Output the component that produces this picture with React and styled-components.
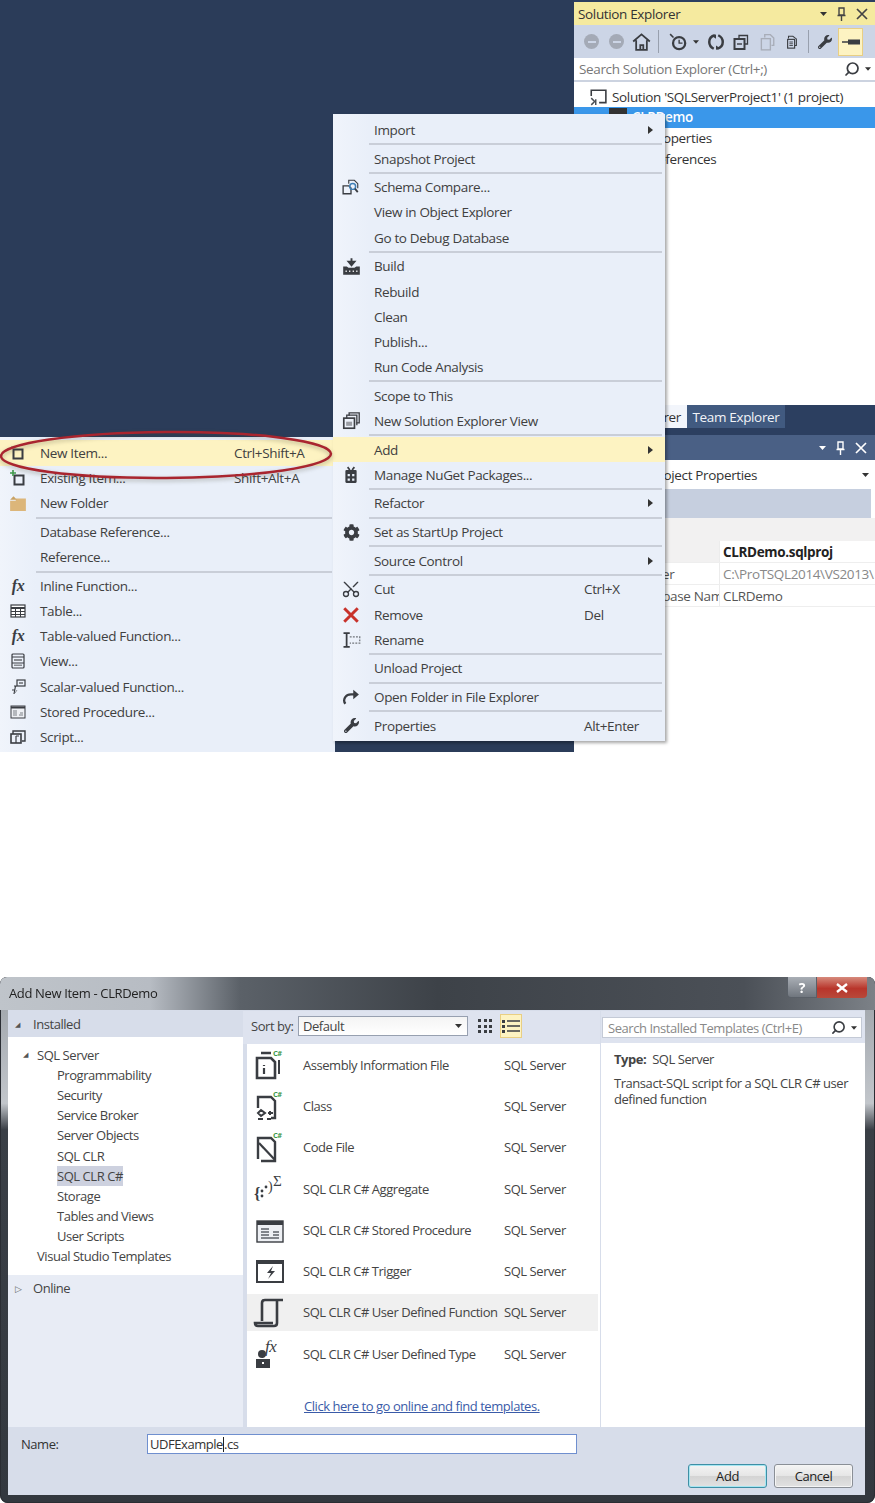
import React from "react";
import styled, { createGlobalStyle } from "styled-components";
import { Search, Scissors } from "lucide-react";
import { FaCog, FaWrench } from "react-icons/fa";

const GlobalStyle = createGlobalStyle`
  html, body { margin: 0; padding: 0; background: #fff; }
  body { font-family: "Open Sans", "Noto Sans", sans-serif; color: #3a3a3a; }
  * { box-sizing: border-box; }
`;

const Ink = "#3a3d42";

const Glyph = ({ s = 16, children, ...rest }) => (
  <svg width={s} height={s} viewBox="0 0 16 16" fill="none" {...rest}>
    {children}
  </svg>
);

const Caret = ({ color = "#333", w = 7 }) => (
  <svg width={w} height="4" viewBox="0 0 7 4"><path d="M0 0h7L3.5 4z" fill={color} /></svg>
);

/* menu icons */
const icons = {
  schema: (
    <Glyph s={18}>
      <path d="M1 7h5l2 2v5H1z" stroke={Ink} strokeWidth="1.2" />
      <path d="M6 5V2h5l3 3v4" stroke={Ink} strokeWidth="1" />
      <circle cx="9.5" cy="7.5" r="2.6" stroke="#3f7fb5" strokeWidth="1.3" />
      <path d="M11.5 9.5l2.5 3" stroke={Ink} strokeWidth="1.6" />
    </Glyph>
  ),
  build: (
    <Glyph s={19}>
      <path d="M8 1v5M5.5 4L8 7l2.5-3z" stroke={Ink} strokeWidth="1.6" fill={Ink} />
      <path d="M1 8h3l1.5 1h5L12 8h3v7H1z" fill={Ink} />
      <path d="M3 12h1M6 12h1M9 12h1M12 12h1" stroke="#fff" strokeWidth="1.4" />
    </Glyph>
  ),
  newView: (
    <Glyph s={19}>
      <path d="M6 4V1.5h8.5V10H12" stroke={Ink} strokeWidth="1.1" />
      <path d="M4 6V3.5h8.5V12" stroke={Ink} strokeWidth="1.1" />
      <rect x="1.5" y="6" width="9" height="8.5" stroke={Ink} strokeWidth="1.4" />
      <rect x="3.5" y="9" width="5" height="3.5" fill="#9a9da3" />
    </Glyph>
  ),
  nuget: (
    <Glyph s={18}>
      <path d="M5 1l2 2.5M11 1L9 3.5" stroke={Ink} strokeWidth="1.5" />
      <rect x="3" y="3.5" width="10" height="11.5" rx="1" fill={Ink} />
      <path d="M5 7h2v2H5zM9 7h2v2H9zM5 11h2v2H5zM9 11h2v2H9z" fill="#e8eff9" />
    </Glyph>
  ),
  gear: <FaCog size={17} color={Ink} />,
  cut: <Scissors size={20} color={Ink} strokeWidth={1.6} style={{ transform: "rotate(-90deg)" }} />,
  remove: (
    <Glyph s={18}>
      <path d="M2 2l12 12M14 2L2 14" stroke="#c8322b" strokeWidth="2.6" />
    </Glyph>
  ),
  rename: (
    <Glyph s={20}>
      <path d="M2 2.5h5M2 13.5h5M4.5 2.5v11" stroke={Ink} strokeWidth="1.4" />
      <path d="M7 5.5h8v5H7" stroke="#70747a" strokeWidth="1" strokeDasharray="1.5 1" />
    </Glyph>
  ),
  open: (
    <Glyph s={18}>
      <path d="M3 14c-1.5-2-1.5-4 0-6 1-1.5 3-2.3 5-2.3h3" stroke={Ink} strokeWidth="2" />
      <path d="M10 1.5l5 4.2-5 4.2z" fill={Ink} />
    </Glyph>
  ),
  wrench: <FaWrench size={15} color={Ink} />,
  newItem: (
    <Glyph>
      <rect x="3.5" y="4.5" width="9" height="9" stroke={Ink} strokeWidth="2" />
      <path d="M1 1.5h3" stroke="#c9b9a0" strokeWidth="1" />
    </Glyph>
  ),
  existing: (
    <Glyph>
      <rect x="4.5" y="5.5" width="9" height="9" stroke={Ink} strokeWidth="2" />
      <path d="M3 0v6M0 3h6" stroke="#3f9a4c" strokeWidth="1.6" />
    </Glyph>
  ),
  folder: (
    <Glyph s={18}>
      <path d="M1 6h5V4h9v11H1z" fill="#dcb67a" />
      <path d="M1 5l3-3 3 3z" fill="#c9a263" />
    </Glyph>
  ),
  table: (
    <Glyph>
      <rect x="1" y="2" width="14" height="12" fill="#fff" stroke={Ink} strokeWidth="1.2" />
      <path d="M1 5h14" stroke={Ink} strokeWidth="2" />
      <path d="M1 8.5h14M1 11.5h14M5.5 4v10M10.5 4v10" stroke={Ink} strokeWidth="1" />
    </Glyph>
  ),
  view: (
    <Glyph>
      <rect x="2" y="1" width="12" height="14" rx="1" stroke={Ink} strokeWidth="1.2" />
      <path d="M2 4h12M2 10h12" stroke={Ink} strokeWidth="1" />
      <rect x="4" y="6" width="8" height="2" fill="#8a8d92" />
      <rect x="4" y="11.5" width="8" height="1.5" fill="#8a8d92" />
    </Glyph>
  ),
  scalar: (
    <Glyph>
      <rect x="7" y="1" width="8" height="6" stroke={Ink} strokeWidth="1.2" />
      <rect x="9" y="3" width="4" height="2" fill="#8a8d92" />
      <path d="M4 7h3M5.5 7L4 15M2 11h3" stroke={Ink} strokeWidth="1.2" />
      <path d="M7 11l-2 3" stroke="#8a8d92" strokeWidth="1" />
    </Glyph>
  ),
  stored: (
    <Glyph>
      <rect x="1" y="2" width="14" height="12" fill="#eef0f4" stroke={Ink} strokeWidth="1" />
      <path d="M1 3.5h14" stroke={Ink} strokeWidth="2" />
      <path d="M3 7h4M3 9h4M3 11h4M10 9h3M9 11h4" stroke="#7c8086" strokeWidth="1" />
    </Glyph>
  ),
  script: (
    <Glyph>
      <path d="M3 5V2h12v10h-3" stroke={Ink} strokeWidth="1.4" />
      <rect x="1" y="5" width="10" height="9" stroke={Ink} strokeWidth="1.6" />
      <path d="M6 7v7M6 7h3" stroke={Ink} strokeWidth="1.2" />
    </Glyph>
  ),
};

const projectMenu = [
  { label: "Import", arrow: true },
  "sep",
  { label: "Snapshot Project" },
  "sep",
  { label: "Schema Compare...", icon: "schema" },
  { label: "View in Object Explorer" },
  { label: "Go to Debug Database" },
  "sep",
  { label: "Build", icon: "build" },
  { label: "Rebuild" },
  { label: "Clean" },
  { label: "Publish..." },
  { label: "Run Code Analysis" },
  "sep",
  { label: "Scope to This" },
  { label: "New Solution Explorer View", icon: "newView" },
  "sep",
  { label: "Add", arrow: true, hot: true },
  { label: "Manage NuGet Packages...", icon: "nuget" },
  "sep",
  { label: "Refactor", arrow: true },
  "sep",
  { label: "Set as StartUp Project", icon: "gear" },
  "sep",
  { label: "Source Control", arrow: true },
  "sep",
  { label: "Cut", icon: "cut", shortcut: "Ctrl+X" },
  { label: "Remove", icon: "remove", shortcut: "Del" },
  { label: "Rename", icon: "rename" },
  "sep",
  { label: "Unload Project" },
  "sep",
  { label: "Open Folder in File Explorer", icon: "open" },
  "sep",
  { label: "Properties", icon: "wrench", shortcut: "Alt+Enter" },
];

const addMenu = [
  { label: "New Item...", icon: "newItem", shortcut: "Ctrl+Shift+A", hot: true },
  { label: "Existing Item...", icon: "existing", shortcut: "Shift+Alt+A" },
  { label: "New Folder", icon: "folder" },
  "sep",
  { label: "Database Reference..." },
  { label: "Reference..." },
  "sep",
  { label: "Inline Function...", fx: true },
  { label: "Table...", icon: "table" },
  { label: "Table-valued Function...", fx: true },
  { label: "View...", icon: "view" },
  { label: "Scalar-valued Function...", icon: "scalar" },
  { label: "Stored Procedure...", icon: "stored" },
  { label: "Script...", icon: "script" },
];

const treeRows = [
  { label: "SQL Server", indent: 29, open: true },
  { label: "Programmability", indent: 49 },
  { label: "Security", indent: 49 },
  { label: "Service Broker", indent: 49 },
  { label: "Server Objects", indent: 49 },
  { label: "SQL CLR", indent: 49 },
  { label: "SQL CLR C#", indent: 49, picked: true },
  { label: "Storage", indent: 49 },
  { label: "Tables and Views", indent: 49 },
  { label: "User Scripts", indent: 49 },
  { label: "Visual Studio Templates", indent: 29 },
];

const CsBadge = () => (
  <text x="20" y="7" fontSize="7.5" fontWeight="700" fill="#3f9a4c" fontFamily="Open Sans">C#</text>
);

const templateIcons = {
  info: (
    <svg width="32" height="32" viewBox="0 0 32 32" fill="none">
      <path d="M8 4h10M4 9h14l4 4v16H4z" stroke={Ink} strokeWidth="2.6" />
      <path d="M26 11v14" stroke={Ink} strokeWidth="2" />
      <path d="M11 16v1M11 19v6" stroke={Ink} strokeWidth="2.2" />
      <CsBadge />
    </svg>
  ),
  class: (
    <svg width="32" height="32" viewBox="0 0 32 32" fill="none">
      <path d="M5 18V7h13l4 4v17h-4" stroke={Ink} strokeWidth="2.4" />
      <path d="M8 20l4 3-4 3-3-3zM15 23h5M17 21v4M5 29h5M14 29h4" stroke={Ink} strokeWidth="2" />
      <CsBadge />
    </svg>
  ),
  code: (
    <svg width="32" height="32" viewBox="0 0 32 32" fill="none">
      <path d="M5 28V7h13l4 4v19H8" stroke={Ink} strokeWidth="2.4" />
      <path d="M6 12l16 17" stroke={Ink} strokeWidth="2.2" />
      <CsBadge />
    </svg>
  ),
  aggregate: (
    <svg width="32" height="32" viewBox="0 0 32 32" fill="none">
      <text x="1" y="26" fontSize="16" fontWeight="700" fill={Ink} fontFamily="Liberation Serif">{"{"}</text>
      <circle cx="9" cy="23" r="1.4" fill={Ink} />
      <circle cx="9" cy="18" r="1.4" fill={Ink} />
      <circle cx="13" cy="14" r="1.4" fill={Ink} />
      <text x="15" y="18" fontSize="14" fill={Ink} fontFamily="Liberation Serif">{")"}</text>
      <text x="20" y="13" fontSize="15" fill={Ink} fontFamily="Liberation Serif">Σ</text>
    </svg>
  ),
  stored: (
    <svg width="32" height="32" viewBox="0 0 32 32" fill="none">
      <rect x="4" y="7" width="26" height="21" fill="#eef0f4" stroke={Ink} strokeWidth="1.4" />
      <rect x="4" y="7" width="26" height="4" fill={Ink} />
      <path d="M8 15h8M8 18h8M8 21h8M8 24h18M20 18h6M20 21h6" stroke="#5e6268" strokeWidth="1.3" />
    </svg>
  ),
  trigger: (
    <svg width="32" height="32" viewBox="0 0 32 32" fill="none">
      <rect x="4" y="6" width="26" height="21" stroke={Ink} strokeWidth="2" />
      <rect x="4" y="5" width="26" height="4" fill={Ink} />
      <path d="M20 11l-6 7h4l-3 6 7-8h-4z" fill={Ink} />
    </svg>
  ),
  udf: (
    <svg width="32" height="32" viewBox="0 0 32 32" fill="none">
      <path d="M9 25V7c0-2 1-3 3-3h18" stroke={Ink} strokeWidth="2.6" />
      <path d="M24 5v22c0 2-1 3-3 3H5c-2 0-3-1-3-3h18" stroke={Ink} strokeWidth="2.6" />
    </svg>
  ),
  udt: (
    <svg width="32" height="32" viewBox="0 0 32 32" fill="none">
      <circle cx="9" cy="16" r="4" fill={Ink} />
      <rect x="3" y="21" width="14" height="9" fill={Ink} />
      <rect x="9" y="24" width="2" height="2" fill="#fff" />
      <text x="12" y="14" fontSize="17" fontStyle="italic" fill={Ink} fontFamily="Liberation Serif">fx</text>
    </svg>
  ),
};

const templates = [
  { label: "Assembly Information File", icon: "info" },
  { label: "Class", icon: "class" },
  { label: "Code File", icon: "code" },
  { label: "SQL CLR C# Aggregate", icon: "aggregate" },
  { label: "SQL CLR C# Stored Procedure", icon: "stored" },
  { label: "SQL CLR C# Trigger", icon: "trigger" },
  { label: "SQL CLR C# User Defined Function", icon: "udf", picked: true },
  { label: "SQL CLR C# User Defined Type", icon: "udt" },
];

const MenuList = ({ items, labelWidth, labelPad }) =>
  items.map((item, i) =>
    item === "sep" ? (
      <Sep key={i} />
    ) : (
      <MenuRow key={i} $hot={item.hot} $labelWidth={labelWidth}>
        <Gutter>{item.fx ? <FxMark>fx</FxMark> : item.icon && icons[item.icon]}</Gutter>
        <MenuLabel $pad={labelPad}>{item.label}</MenuLabel>
        <span>{item.shortcut}</span>
        {item.arrow && <Arrow />}
      </MenuRow>
    )
  );

export default function App() {
  return (
    <Page>
      <GlobalStyle />
      <Ide>
        <Backdrop />
        <Docks>
          <ExplorerPanel>
            <PanelHead>
              <span>Solution Explorer</span>
              <HeadTools>
                <Caret />
                <PinGlyph color="#444" />
                <CloseGlyph color="#444" />
              </HeadTools>
            </PanelHead>
            <Toolbar>
              <Slot $w={25}><NavDot /></Slot>
              <Slot $w={25}><NavDot /></Slot>
              <Slot $w={25}>
                <Glyph s={19}>
                  <path d="M1 8l7-6 7 6M3.5 7v8h9V7M7 15v-4h2.5v4" stroke={Ink} strokeWidth="1.5" />
                </Glyph>
              </Slot>
              <Slot $w={8}><ToolSep /></Slot>
              <Slot $w={31}>
                <Glyph s={18}>
                  <path d="M1 1l3 3" stroke={Ink} strokeWidth="1.4" />
                  <circle cx="9" cy="9" r="5.4" stroke={Ink} strokeWidth="2" />
                  <path d="M9 6v3h3" stroke={Ink} strokeWidth="1.2" />
                </Glyph>
              </Slot>
              <Slot $w={6}><Caret /></Slot>
              <Slot $w={34}>
                <Glyph s={18}>
                  <path d="M7 2C3 3 2 6 2 8c0 3 2 5 4 6M9 14c4-1 5-4 5-6 0-3-2-5-4-6" stroke={Ink} strokeWidth="2.2" />
                  <path d="M8 1v4L5 3zM8 15v-4l3 2z" fill={Ink} />
                </Glyph>
              </Slot>
              <Slot $w={16}>
                <Glyph s={18}>
                  <path d="M6 4V1.5h8.5V10H12" stroke={Ink} strokeWidth="1.3" />
                  <rect x="1.5" y="5" width="10" height="10" stroke={Ink} strokeWidth="2" />
                  <path d="M4 10h5" stroke={Ink} strokeWidth="1.4" />
                </Glyph>
              </Slot>
              <Slot $w={36}>
                <Glyph s={18}>
                  <path d="M6 4V1.5h5l3 3V11h-2" stroke="#a8adb8" strokeWidth="1.2" />
                  <rect x="3" y="5" width="8" height="10" stroke="#a8adb8" strokeWidth="1.2" />
                </Glyph>
              </Slot>
              <Slot $w={14}>
                <Glyph s={18}>
                  <path d="M4 4V1.5h5l4 3V12h-2" stroke={Ink} strokeWidth="1.2" />
                  <rect x="3" y="5" width="8" height="10" stroke={Ink} strokeWidth="1.3" />
                  <path d="M5 8h4M5 10h4M5 12h4" stroke={Ink} strokeWidth="1" />
                </Glyph>
              </Slot>
              <Slot $w={18}><ToolSep /></Slot>
              <Slot $w={16}><FaWrench size={14} color={Ink} /></Slot>
              <PinButton>
                <svg width="18" height="6" viewBox="0 0 18 6"><path d="M0 3h6" stroke={Ink} strokeWidth="1.5" /><rect x="6" y="0.5" width="12" height="5" fill={Ink} /></svg>
              </PinButton>
            </Toolbar>
            <PanelSearch>
              <span>Search Solution Explorer (Ctrl+;)</span>
              <SearchTools>
                <Search size={16} color={Ink} strokeWidth={2.6} style={{ transform: "scaleX(-1)" }} />
                <Caret w={6} />
              </SearchTools>
            </PanelSearch>
            <Tree>
              <TreeRow $left={15}>
                <Glyph s={18}>
                  <path d="M2 7V2h13v11H9" stroke={Ink} strokeWidth="1.4" />
                  <path d="M2 9l3 3-3 3M6 10v5" stroke="#4a4f55" strokeWidth="1.3" />
                </Glyph>
                <span>Solution 'SQLServerProject1' (1 project)</span>
              </TreeRow>
              <TreeRow $left={35} $selected>
                <Glyph s={18}><rect x="0" y="0" width="16" height="12" fill="#333" /></Glyph>
                <span>CLRDemo</span>
              </TreeRow>
              <TreeRow $left={76}>Properties</TreeRow>
              <TreeRow $left={76}>References</TreeRow>
            </Tree>
          </ExplorerPanel>
          <TabStrip>
            <DockTab $active>Solution Explorer</DockTab>
            <DockTab>Team Explorer</DockTab>
          </TabStrip>
          <PropertiesPanel>
            <PropsHead>
              <Caret color="#fff" />
              <PinGlyph color="#fff" />
              <CloseGlyph color="#fff" />
            </PropsHead>
            <PropsPicker>
              <span>CLRDemo Project Properties</span>
              <Caret />
            </PropsPicker>
            <PropsBand />
            <PropsSection />
            <PropRow $head>
              <PropName />
              <PropValue $bold>CLRDemo.sqlproj</PropValue>
            </PropRow>
            <PropRow>
              <PropName $pad={18}>Project Folder</PropName>
              <PropValue $muted>C:\ProTSQL2014\VS2013\</PropValue>
            </PropRow>
            <PropRow>
              <PropName $pad={60}>Database Name</PropName>
              <PropValue>CLRDemo</PropValue>
            </PropRow>
          </PropertiesPanel>
        </Docks>

        <AddMenu>
          <MenuList items={addMenu} labelWidth={198} labelPad={4} />
        </AddMenu>
        <ProjectMenu>
          <MenuList items={projectMenu} labelWidth={215} labelPad={5} />
        </ProjectMenu>
        <Callout viewBox="0 0 340 60" width="340" height="60">
          <ellipse cx="166" cy="26" rx="165" ry="23" fill="none" stroke="#a9252f" strokeWidth="2.5" transform="rotate(-0.4 166 26)" />
        </Callout>
      </Ide>

      <Dialog>
        <TitleBar>
          <TitleText>Add New Item - CLRDemo</TitleText>
          <WindowButtons>
            <HelpButton>?</HelpButton>
            <ExitButton>
              <svg width="12" height="10" viewBox="0 0 12 10"><path d="M1 1l10 8M11 1L1 9" stroke="#fff" strokeWidth="2.4" /></svg>
            </ExitButton>
          </WindowButtons>
        </TitleBar>
        <DialogBody>
          <Panes>
            <LeftPane>
              <FoldBand>
                <FoldMark>◢</FoldMark>Installed
              </FoldBand>
              <TemplateTree>
                {treeRows.map((r) => (
                  <CategoryRow key={r.label} $indent={r.indent}>
                    {r.open && <OpenMark>◢</OpenMark>}
                    <CategoryLabel $picked={r.picked}>{r.label}</CategoryLabel>
                  </CategoryRow>
                ))}
              </TemplateTree>
              <OnlineRow>
                <FoldMark $closed>▷</FoldMark>Online
              </OnlineRow>
            </LeftPane>
            <CenterPane>
              <SortBar>
                <SortLabel>Sort by:</SortLabel>
                <SortSelect>
                  <span>Default</span>
                  <Caret />
                </SortSelect>
                <ViewDots>
                  {Array.from({ length: 9 }, (_, i) => <i key={i} />)}
                </ViewDots>
                <ViewToggle>
                  <svg width="18" height="16" viewBox="0 0 18 16">
                    <path d="M0 2h3v3H0zM0 7h3v3H0zM0 12h3v3H0z" fill={Ink} />
                    <path d="M5 3h13M5 8h13M5 13h13" stroke={Ink} strokeWidth="1.4" />
                  </svg>
                </ViewToggle>
              </SortBar>
              <TemplateList>
                {templates.map((t) => (
                  <TemplateRow key={t.label} $picked={t.picked}>
                    <TemplateIcon>{templateIcons[t.icon]}</TemplateIcon>
                    <TemplateName>{t.label}</TemplateName>
                    <span>SQL Server</span>
                  </TemplateRow>
                ))}
                <OnlineLink href="#">Click here to go online and find templates.</OnlineLink>
              </TemplateList>
            </CenterPane>
            <DetailPane>
              <DetailSearchBar>
                <DetailSearch>
                  <span>Search Installed Templates (Ctrl+E)</span>
                  <SearchTools>
                    <Search size={15} color={Ink} strokeWidth={2.6} style={{ transform: "scaleX(-1)" }} />
                    <Caret w={6} />
                  </SearchTools>
                </DetailSearch>
              </DetailSearchBar>
              <DetailBody>
                <DetailType><b>Type:</b>&nbsp; SQL Server</DetailType>
                <p>Transact-SQL script for a SQL CLR C# user defined function</p>
              </DetailBody>
            </DetailPane>
          </Panes>
          <FootBar>
            <NameRow>
              <NameLabel>Name:</NameLabel>
              <NameInput>
                UDFExample<TextCaret />.cs
              </NameInput>
            </NameRow>
            <ButtonRow>
              <DialogButton $default>Add</DialogButton>
              <DialogButton>Cancel</DialogButton>
            </ButtonRow>
          </FootBar>
        </DialogBody>
      </Dialog>
    </Page>
  );
}

const PinGlyph = ({ color }) => (
  <svg width="9" height="14" viewBox="0 0 9 14" fill="none">
    <path d="M2 1h5v7H2zM0.5 8.5h8M4.5 9v5" stroke={color} strokeWidth="1.4" />
  </svg>
);

const CloseGlyph = ({ color }) => (
  <svg width="12" height="12" viewBox="0 0 12 12">
    <path d="M1 1l10 10M11 1L1 11" stroke={color} strokeWidth="1.7" />
  </svg>
);

const Page = styled.div`
  width: 875px;
  height: 1503px;
  overflow: hidden;
  filter: blur(0.45px);
  font-size: 13.5px;
  letter-spacing: -0.35px;
`;

const Ide = styled.div`
  position: relative;
  display: flex;
  height: 752px;
  overflow: hidden;
`;

const Backdrop = styled.div`
  flex: 1;
  background: #2b3c59;
`;

const Docks = styled.div`
  width: 301px;
  display: flex;
  flex-direction: column;
  background: #2c3f60;
  padding-top: 2px;
`;

const ExplorerPanel = styled.div`
  height: 403px;
  display: flex;
  flex-direction: column;
  background: #fff;
`;

const PanelHead = styled.div`
  height: 23px;
  flex: none;
  padding: 0 7px 0 4px;
  display: flex;
  align-items: center;
  justify-content: space-between;
  background: #f5ea9f;
  color: #333;
`;

const HeadTools = styled.div`
  display: flex;
  align-items: center;
  gap: 10px;
`;

const Toolbar = styled.div`
  height: 33px;
  flex: none;
  padding-left: 5px;
  display: flex;
  align-items: center;
  background: #ccd5e6;
`;

const Slot = styled.div`
  width: ${(p) => p.$w}px;
  flex: none;
  display: flex;
  justify-content: center;
  align-items: center;
`;

const NavDot = styled.div`
  width: 15px;
  height: 15px;
  border-radius: 50%;
  background: #a4aab6;
  position: relative;
  &::after {
    content: "";
    position: absolute;
    top: 6.5px;
    left: 3.5px;
    width: 8px;
    height: 2px;
    background: #ccd5e6;
  }
`;

const ToolSep = styled.div`
  width: 1px;
  height: 23px;
  background: #98a0ae;
`;

const PinButton = styled.div`
  width: 25px;
  height: 28px;
  margin-left: 5px;
  flex: none;
  display: flex;
  align-items: center;
  justify-content: center;
  background: #fdf3c2;
  border: 1px solid #e9cf83;
`;

const PanelSearch = styled.div`
  height: 24px;
  flex: none;
  padding: 0 4px 0 5px;
  display: flex;
  align-items: center;
  justify-content: space-between;
  background: #fff;
  border-bottom: 2px solid #ccd3e0;
  color: #777;
`;

const SearchTools = styled.div`
  display: flex;
  align-items: center;
  gap: 5px;
`;

const Tree = styled.div`
  flex: 1;
  padding-top: 4.5px;
  color: #333;
`;

const TreeRow = styled.div`
  height: 20.6px;
  padding-left: ${(p) => p.$left}px;
  display: flex;
  align-items: center;
  gap: 5px;
  background: ${(p) => (p.$selected ? "#3a97ea" : "transparent")};
  color: ${(p) => (p.$selected ? "#fff" : "#333")};
  font-weight: ${(p) => (p.$selected ? 600 : 400)};
  white-space: nowrap;
`;

const TabStrip = styled.div`
  height: 23px;
  flex: none;
  display: flex;
`;

const DockTab = styled.div`
  width: ${(p) => (p.$active ? "113px" : "98px")};
  padding-right: ${(p) => (p.$active ? "6px" : "0")};
  display: flex;
  align-items: center;
  justify-content: ${(p) => (p.$active ? "flex-end" : "center")};
  white-space: nowrap;
  background: ${(p) => (p.$active ? "#f2f5fb" : "#415a80")};
  color: ${(p) => (p.$active ? "#333" : "#f2f4f8")};
`;

const PropertiesPanel = styled.div`
  flex: 1;
  margin-top: 7px;
  background: #fff;
  display: flex;
  flex-direction: column;
`;

const PropsHead = styled.div`
  height: 25px;
  flex: none;
  padding-right: 8px;
  display: flex;
  align-items: center;
  justify-content: flex-end;
  gap: 10px;
  background: #4a6085;
`;

const PropsPicker = styled.div`
  height: 29px;
  flex: none;
  padding: 0 6px 0 0;
  display: flex;
  align-items: center;
  justify-content: space-between;
  color: #333;
  white-space: nowrap;
  & > span {
    margin-left: 14px;
  }
`;

const PropsBand = styled.div`
  height: 29px;
  flex: none;
  margin-right: 4px;
  background: #c6cfdf;
`;

const PropsSection = styled.div`
  height: 23px;
  flex: none;
  background: #f2f1f1;
`;

const PropRow = styled.div`
  height: 22px;
  flex: none;
  display: flex;
  border-bottom: 1px solid #eeeeee;
  background: ${(p) => (p.$head ? "#f2f1f1" : "#fff")};
`;

const PropName = styled.div`
  width: 146px;
  flex: none;
  padding-left: ${(p) => p.$pad || 8}px;
  color: #555;
  white-space: nowrap;
  overflow: hidden;
  border-right: 1px solid #ececec;
  display: flex;
  align-items: center;
`;

const PropValue = styled.div`
  flex: 1;
  padding-left: 3px;
  display: flex;
  align-items: center;
  white-space: nowrap;
  overflow: hidden;
  background: #fff;
  font-weight: ${(p) => (p.$bold ? 700 : 400)};
  color: ${(p) => (p.$bold ? "#222" : p.$muted ? "#888" : "#555")};
`;

const MenuPanel = styled.div`
  position: absolute;
  background: #e9eff9;
  padding-top: 3.4px;
  color: #404040;
  box-shadow: 2px 2px 3px rgba(0, 0, 0, 0.35);
  background-image: linear-gradient(90deg, #f0f4fb 0, #e9eff9 36px);
`;

const ProjectMenu = styled(MenuPanel)`
  left: 333px;
  top: 114px;
  width: 332px;
  height: 627px;
`;

const AddMenu = styled(MenuPanel)`
  left: 0;
  top: 437px;
  width: 335px;
  height: 320px;
  box-shadow: none;
`;

const MenuRow = styled.div`
  height: 25.2px;
  display: grid;
  grid-template-columns: 36px ${(p) => p.$labelWidth}px 1fr 17px;
  align-items: center;
  white-space: nowrap;
  background: ${(p) => (p.$hot ? "#fdf3c2" : "transparent")};
`;

const Gutter = styled.div`
  display: flex;
  justify-content: center;
  align-items: center;
  height: 100%;
`;

const MenuLabel = styled.span`
  padding-left: ${(p) => p.$pad}px;
`;

const FxMark = styled.span`
  font-family: "Liberation Serif", serif;
  font-style: italic;
  font-weight: 700;
  font-size: 16px;
  color: ${Ink};
`;

const Arrow = styled.i`
  grid-column: 4;
  width: 0;
  height: 0;
  border-left: 5px solid #333;
  border-top: 4px solid transparent;
  border-bottom: 4px solid transparent;
`;

const Sep = styled.div`
  height: 3.47px;
  margin: 0 3px 0 36px;
  display: flex;
  align-items: center;
  &::after {
    content: "";
    flex: 1;
    height: 2px;
    background: #c9ced8;
  }
`;

const Callout = styled.svg`
  position: absolute;
  left: 0;
  top: 429px;
  filter: drop-shadow(0 2px 2px rgba(60, 60, 40, 0.35));
`;

const Dialog = styled.div`
  margin-top: 225px;
  height: 526px;
  padding: 0 10px 8px 8px;
  display: flex;
  flex-direction: column;
  border-radius: 7px 7px 8px 8px;
  background: linear-gradient(180deg, #3d4248 0, #a4a9af 6%, #c2c6cb 24%, #3a3f46 29%, #33383f 100%);
  box-shadow: inset 0 0 0 1px #2a2d33;
`;

const TitleBar = styled.div`
  height: 33px;
  flex: none;
  margin: 0 -10px 0 -8px;
  padding: 0 8px 2px 9px;
  display: flex;
  justify-content: space-between;
  border-radius: 7px 7px 0 0;
  background: linear-gradient(90deg, #bfc4ca 0, #b7bcc3 150px, #5b6168 240px, #3d4248 50%, #4b5057 85%, #7c8187 100%);
`;

const TitleText = styled.div`
  align-self: center;
  font-size: 13px;
  color: #222;
  white-space: nowrap;
`;

const WindowButtons = styled.div`
  display: flex;
  align-items: flex-start;
  height: 21px;
  border-radius: 0 0 4px 4px;
`;

const HelpButton = styled.div`
  width: 30px;
  height: 21px;
  display: flex;
  align-items: center;
  justify-content: center;
  border: 1px solid #5a6068;
  border-top: none;
  border-radius: 0 0 0 4px;
  background: linear-gradient(180deg, #a9aeb5, #70767e);
  color: #fff;
  font-size: 14px;
  font-weight: 700;
`;

const ExitButton = styled.div`
  width: 50px;
  height: 21px;
  display: flex;
  align-items: center;
  justify-content: center;
  border-radius: 0 0 4px 0;
  background: linear-gradient(180deg, #d68a7c, #b8352b 55%, #b8493a);
`;

const DialogBody = styled.div`
  flex: 1;
  display: flex;
  flex-direction: column;
  background: #d7ddea;
  min-height: 0;
`;

const Panes = styled.div`
  height: 417px;
  flex: none;
  display: grid;
  grid-template-columns: 235px 357px 265px;
  padding-top: 1px;
  font-size: 13px;
  letter-spacing: -0.45px;
  color: #444;
`;

const LeftPane = styled.div`
  display: flex;
  flex-direction: column;
  background: #e8ecf5;
`;

const FoldBand = styled.div`
  height: 26px;
  flex: none;
  display: flex;
  align-items: center;
  padding-left: 7px;
  background: #d7ddea;
`;

const FoldMark = styled.span`
  width: 18px;
  font-size: ${(p) => (p.$closed ? "9px" : "7px")};
  color: ${(p) => (p.$closed ? "#666" : "#555")};
`;

const TemplateTree = styled.div`
  height: 238px;
  flex: none;
  padding-top: 7.5px;
  background: #fff;
`;

const CategoryRow = styled.div`
  position: relative;
  height: 20.2px;
  padding-left: ${(p) => p.$indent}px;
  display: flex;
  align-items: center;
  white-space: nowrap;
`;

const OpenMark = styled.span`
  position: absolute;
  left: 15px;
  font-size: 7px;
  color: #555;
`;

const CategoryLabel = styled.span`
  padding: 1px 0;
  background: ${(p) => (p.$picked ? "#cdd1df" : "transparent")};
`;

const OnlineRow = styled.div`
  height: 26px;
  flex: none;
  display: flex;
  align-items: center;
  padding-left: 7px;
`;

const CenterPane = styled.div`
  margin-left: 4px;
  display: flex;
  flex-direction: column;
  min-width: 0;
  background: #fff;
`;

const SortBar = styled.div`
  height: 33px;
  flex: none;
  margin-left: -4px;
  padding: 0 0 3px 8px;
  display: flex;
  align-items: center;
  background: #dee3ef;
  white-space: nowrap;
`;

const SortLabel = styled.span`
  width: 47px;
  flex: none;
`;

const SortSelect = styled.div`
  width: 170px;
  height: 20px;
  padding: 0 5px 0 4px;
  display: flex;
  align-items: center;
  justify-content: space-between;
  background: linear-gradient(180deg, #f4f4f4, #fff);
  border: 1px solid #97a0b0;
`;

const ViewDots = styled.div`
  width: 14px;
  margin-left: 10px;
  display: grid;
  grid-template-columns: repeat(3, 3px);
  gap: 2.5px;
  & > i {
    height: 3px;
    background: ${Ink};
  }
`;

const ViewToggle = styled.div`
  width: 22px;
  height: 24px;
  margin-left: 8px;
  display: flex;
  align-items: center;
  justify-content: center;
  background: #fdf3c2;
  border: 1px solid #e9cf83;
`;

const TemplateList = styled.div`
  flex: 1;
  display: flex;
  flex-direction: column;
  white-space: nowrap;
`;

const TemplateRow = styled.div`
  height: 41.3px;
  flex: none;
  margin-right: 2px;
  padding-left: 6px;
  display: flex;
  align-items: center;
  background: ${(p) =>
    p.$picked
      ? "linear-gradient(180deg, #fff 0, #fff 2px, #f0f0f0 2px, #f0f0f0 39px, #fff 39px)"
      : "transparent"};
`;

const TemplateIcon = styled.div`
  width: 50px;
  flex: none;
  display: flex;
`;

const TemplateName = styled.span`
  width: 201px;
  flex: none;
`;

const OnlineLink = styled.a`
  margin: 23px 0 0 57px;
  color: #3a5ba8;
  text-decoration: underline;
`;

const DetailPane = styled.div`
  margin-left: 1px;
  display: flex;
  flex-direction: column;
  background: #fff;
`;

const DetailSearchBar = styled.div`
  height: 32px;
  flex: none;
  padding: 6px 3px 0 1px;
  background: #dee3ef;
`;

const DetailSearch = styled.div`
  height: 21px;
  padding: 0 4px 0 5px;
  display: flex;
  align-items: center;
  justify-content: space-between;
  background: #fff;
  border: 1px solid #c4cad6;
  color: #888;
  white-space: nowrap;
`;

const DetailBody = styled.div`
  padding: 8px 10px 0 13px;
  line-height: 16px;
  & > p {
    margin: 8px 0 0;
  }
`;

const DetailType = styled.div`
  & > b {
    font-weight: 700;
  }
`;

const FootBar = styled.div`
  flex: 1;
  padding: 7px 12px 0 13px;
  display: flex;
  flex-direction: column;
  font-size: 13px;
  letter-spacing: -0.45px;
  color: #333;
`;

const NameRow = styled.div`
  display: flex;
  align-items: center;
  height: 20px;
`;

const NameLabel = styled.span`
  width: 126px;
  flex: none;
`;

const NameInput = styled.div`
  width: 430px;
  height: 20px;
  padding-left: 2px;
  display: flex;
  align-items: center;
  background: #fff;
  border: 1px solid #6f8fcf;
`;

const TextCaret = styled.i`
  width: 1px;
  height: 15px;
  background: #222;
`;

const ButtonRow = styled.div`
  margin-top: 10px;
  display: flex;
  justify-content: flex-end;
  gap: 7px;
`;

const DialogButton = styled.div`
  width: 79px;
  height: 24px;
  display: flex;
  align-items: center;
  justify-content: center;
  border: 1px solid ${(p) => (p.$default ? "#3f8fa5" : "#8a8f96")};
  border-radius: 3px;
  box-shadow: inset 0 0 0 1px ${(p) => (p.$default ? "#a5e6f2" : "#f5f5f5")};
  background: linear-gradient(180deg, #f4f4f4, #e6e6e6 48%, #d4d4d4 52%, #e2e2e2);
  color: #222;
`;
